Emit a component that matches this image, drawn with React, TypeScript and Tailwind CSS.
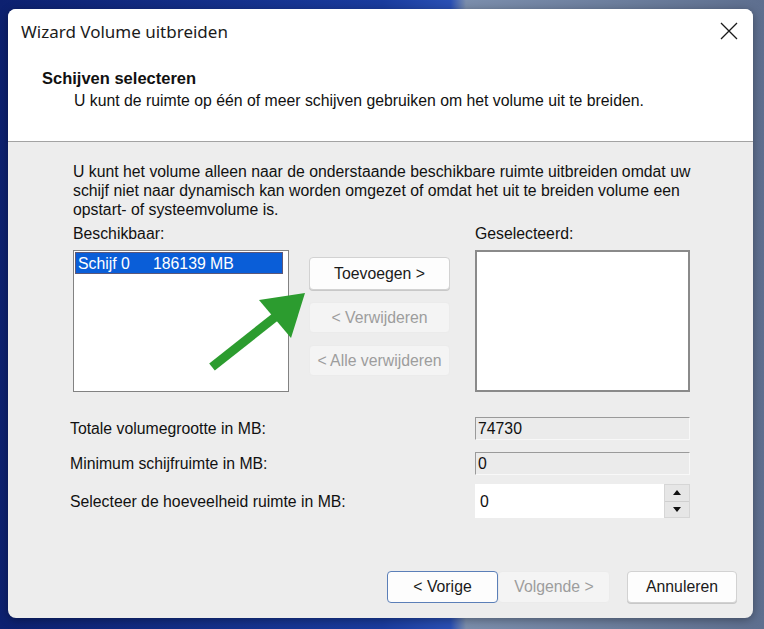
import React from 'react';

const sans = "font-['Liberation_Sans',Arial,sans-serif]";

function WinButton({
  label,
  disabled,
  focused,
  className = '',
}: {
  label: string;
  disabled?: boolean;
  focused?: boolean;
  className?: string;
}) {
  return (
    <div
      className={`flex items-center justify-center rounded-[4px] border text-[15.8px] leading-none ${
        disabled
          ? 'border-[#ebebeb] bg-[#f4f4f4] text-[#9d9d9d]'
          : focused
            ? 'border-[#5b7fb8] bg-[#fdfdfd] text-[#1a1a1a]'
            : 'border-[#d2d2d2] bg-[#fdfdfd] text-[#1a1a1a] shadow-[0_1px_0_#c8c8c8]'
      } ${className}`}
    >
      {label}
    </div>
  );
}

function ReadonlyField({ value }: { value: string }) {
  return (
    <div className="flex h-[23px] w-[215px] items-center border-t border-l border-[#9a9a9a] border-r border-b border-r-[#f8f8f8] border-b-[#f8f8f8] bg-[#ebebeb] pl-[2px] text-[15.8px] text-[#111]">
      {value}
    </div>
  );
}

export default function App() {
  return (
    <div
      className={`relative h-[629px] w-[764px] overflow-hidden bg-[linear-gradient(90deg,#0d2170_0%,#1a3c9e_50%,#2a50b4_59%,#7b8eac_61%,#5e6f8f_100%)] pt-[9px] pl-[8px] ${sans}`}
    >
      <div className="flex h-[609px] w-[745px] flex-col overflow-hidden rounded-[8px] bg-[#ededed] shadow-[0_2px_10px_rgba(0,0,0,0.35)]">
        {/* header */}
        <div className="relative h-[133px] shrink-0 border-b border-[#a3a3a3] bg-white">
          <div className="pt-[11px] pl-[13px] font-['Noto_Sans',sans-serif] text-[17px] leading-[24px] text-[#1b1b1b]">
            Wizard Volume uitbreiden
          </div>
          <svg className="absolute top-[13px] right-[15px]" width="18" height="18" viewBox="0 0 18 18">
            <path d="M1 1 L17 17 M17 1 L1 17" stroke="#1a1a1a" strokeWidth="1.3" fill="none" />
          </svg>
          <div className="mt-[25px] pl-[34px] text-[16.5px] font-bold leading-[18px] text-[#111]">
            Schijven selecteren
          </div>
          <div className="mt-[5px] pl-[66px] text-[15.8px] leading-[18px] text-[#111]">
            U kunt de ruimte op één of meer schijven gebruiken om het volume uit te breiden.
          </div>
        </div>

        {/* body */}
        <div className="flex-1 pt-[20px] pl-[65px] text-[15.8px] leading-[19px] text-[#111]">
          <p>
            U kunt het volume alleen naar de onderstaande beschikbare ruimte uitbreiden omdat uw
            <br />
            schijf niet naar dynamisch kan worden omgezet of omdat het uit te breiden volume een
            <br />
            opstart- of systeemvolume is.
          </p>

          <div className="mt-[5px] flex">
            <div className="w-[216px]">
              <div className="h-[19px]">Beschikbaar:</div>
              <div className="mt-[7px] h-[142px] w-[216px] border border-[#828282] bg-white p-[1px]">
                <div className="flex h-[22px] w-[208px] items-center border border-[#5d5878] bg-[#0a5ed8] pl-[2px] text-white">
                  <span className="w-[75px]">Schijf 0</span>
                  <span>186139 MB</span>
                </div>
              </div>
            </div>

            <div className="ml-[20px] flex w-[141px] flex-col gap-[12px] pt-[33px]">
              <WinButton label="Toevoegen >" className="h-[33px]" />
              <WinButton label="< Verwijderen" disabled className="h-[31px]" />
              <WinButton label="< Alle verwijderen" disabled className="h-[31px]" />
            </div>

            <div className="ml-[25px] w-[215px]">
              <div className="h-[19px]">Geselecteerd:</div>
              <div className="mt-[7px] h-[142px] w-[215px] border-2 border-[#8a8a8a] bg-white" />
            </div>
          </div>

          <div className="mt-[25px] -ml-[3px] flex flex-col">
            <div className="flex h-[23px] items-center">
              <span className="w-[405px]">Totale volumegrootte in MB:</span>
              <ReadonlyField value="74730" />
            </div>
            <div className="mt-[12px] flex h-[23px] items-center">
              <span className="w-[405px]">Minimum schijfruimte in MB:</span>
              <ReadonlyField value="0" />
            </div>
            <div className="mt-[9px] flex h-[34px] items-center">
              <span className="w-[405px]">Selecteer de hoeveelheid ruimte in MB:</span>
              <div className="flex h-[34px] w-[215px] bg-white">
                <div className="flex flex-1 items-center pl-[5px]">0</div>
                <div className="flex w-[26px] flex-col border border-[#d6d6d6]">
                  <div className="flex flex-1 items-center justify-center border-b border-[#cfcfcf] bg-[#e6e6e6]">
                    <svg width="8" height="5" viewBox="0 0 8 5">
                      <path d="M0 5 L4 0 L8 5 Z" fill="#111" />
                    </svg>
                  </div>
                  <div className="flex flex-1 items-center justify-center bg-[#e6e6e6]">
                    <svg width="8" height="5" viewBox="0 0 8 5">
                      <path d="M0 0 L8 0 L4 5 Z" fill="#111" />
                    </svg>
                  </div>
                </div>
              </div>
            </div>
          </div>
        </div>

        {/* footer */}
        <div className="flex shrink-0 justify-end pr-[16px] pb-[15px]">
          <WinButton label="< Vorige" focused className="h-[32px] w-[111px]" />
          <WinButton label="Volgende >" disabled className="h-[32px] w-[112px]" />
          <WinButton label="Annuleren" className="ml-[17px] h-[32px] w-[110px]" />
        </div>
      </div>

      {/* green arrow annotation */}
      <svg className="pointer-events-none absolute top-0 left-0" width="764" height="629" viewBox="0 0 764 629">
        <line x1="212" y1="367" x2="279" y2="314" stroke="#2c9c2f" strokeWidth="9" />
        <polygon points="305,293 259,300 291,338" fill="#2c9c2f" />
      </svg>
    </div>
  );
}
